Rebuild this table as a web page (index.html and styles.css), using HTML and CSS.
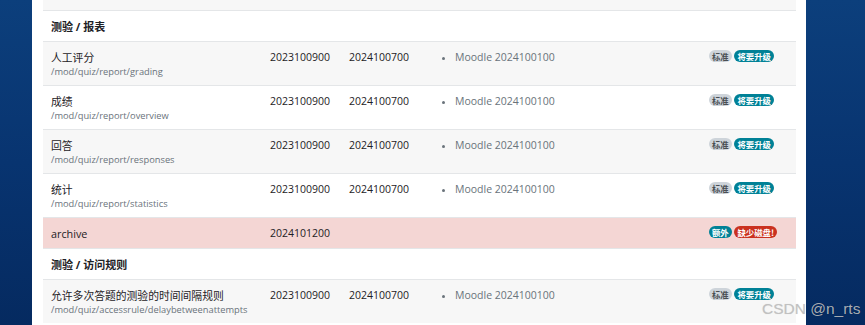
FILE: index.html
```html
<!DOCTYPE html>
<html lang="zh">
<head>
<meta charset="utf-8">
<link rel="stylesheet" href="styles.css">
</head>
<body>
<div class="panel">
  <div class="top-strip"></div>
  <table class="plugins">
    <colgroup>
      <col class="c-name"><col class="c-ver"><col class="c-req"><col class="c-dep"><col class="c-status">
    </colgroup>
    <tbody>
      <tr class="section"><th colspan="5">测验 / 报表</th></tr>
      <tr class="odd">
        <td><div class="name">人工评分</div><div class="path">/mod/quiz/report/grading</div></td>
        <td>2023100900</td><td>2024100700</td>
        <td><ul class="deps"><li>Moodle 2024100100</li></ul></td>
        <td><span class="badge std">标准</span> <span class="badge info">将要升级</span></td>
      </tr>
      <tr>
        <td><div class="name">成绩</div><div class="path">/mod/quiz/report/overview</div></td>
        <td>2023100900</td><td>2024100700</td>
        <td><ul class="deps"><li>Moodle 2024100100</li></ul></td>
        <td><span class="badge std">标准</span> <span class="badge info">将要升级</span></td>
      </tr>
      <tr class="odd">
        <td><div class="name">回答</div><div class="path">/mod/quiz/report/responses</div></td>
        <td>2023100900</td><td>2024100700</td>
        <td><ul class="deps"><li>Moodle 2024100100</li></ul></td>
        <td><span class="badge std">标准</span> <span class="badge info">将要升级</span></td>
      </tr>
      <tr>
        <td><div class="name">统计</div><div class="path">/mod/quiz/report/statistics</div></td>
        <td>2023100900</td><td>2024100700</td>
        <td><ul class="deps"><li>Moodle 2024100100</li></ul></td>
        <td><span class="badge std">标准</span> <span class="badge info">将要升级</span></td>
      </tr>
      <tr class="danger">
        <td><div class="name">archive</div></td>
        <td>2024101200</td><td></td><td></td>
        <td><span class="badge info">额外</span> <span class="badge red">缺少磁盘!</span></td>
      </tr>
      <tr class="section"><th colspan="5">测验 / 访问规则</th></tr>
      <tr class="odd">
        <td><div class="name">允许多次答题的测验的时间间隔规则</div><div class="path">/mod/quiz/accessrule/delaybetweenattempts</div></td>
        <td>2023100900</td><td>2024100700</td>
        <td><ul class="deps"><li>Moodle 2024100100</li></ul></td>
        <td><span class="badge std">标准</span> <span class="badge info">将要升级</span></td>
      </tr>
    </tbody>
  </table>
</div>
<div class="watermark">CSDN @n_rts</div>
</body>
</html>
```

FILE: styles.css
```css
html, body {
  margin: 0;
  padding: 0;
  height: 100%;
  overflow: hidden;
}
body {
  background: linear-gradient(180deg, #0c3f7c 0%, #083470 50%, #052a60 100%);
  font-family: "Open Sans", "Noto Sans CJK SC", sans-serif;
  color: #1d2125;
  font-size: 10.5px;
}
.panel {
  margin-left: 32px;
  width: 753px;
  min-height: 100%;
  background: #fff;
  padding: 0 10px 0 11px;
}
.top-strip {
  height: 10px;
  background: #f7f7f7;
}
.plugins {
  width: 753px;
  border-collapse: collapse;
  table-layout: fixed;
}
.c-name { width: 219px; }
.c-ver { width: 79px; }
.c-req { width: 94px; }
.c-dep { width: 266px; }
.c-status { width: 95px; }
.plugins td, .plugins th {
  border-top: 1px solid #e4e6e8;
  padding: 8px 8px 7px;
  line-height: 15px;
  vertical-align: top;
  text-align: left;
}
.plugins tr.odd td { background: #f7f7f7; }
.plugins tr.danger td { background: #f4d6d4; }
.section th {
  font-weight: 700;
  font-size: 11px;
  background: #fff;
}
.name { line-height: 15px; font-size: 10.8px; }
.path {
  font-size: 9.3px;
  line-height: 13px;
  color: #6a737b;
}
.deps {
  margin: 0;
  padding-left: 12px;
  color: #6a737b;
}
.deps li::marker { font-size: 9px; }
.badge {
  display: inline-block;
  font-family: "Noto Sans CJK SC", sans-serif;
  font-size: 8.4px;
  font-weight: 700;
  line-height: 10px;
  padding: 1px 3px;
  border-radius: 6px;
  vertical-align: 1px;
}
.badge.std { background: #ced4da; color: #4a4f54; }
.badge.info { background: #008196; color: #fff; }
.badge.red { background: #ca3120; color: #fff; }
.watermark {
  position: absolute;
  left: 762px;
  top: 300px;
  font-family: "Liberation Sans", Arial, sans-serif;
  font-size: 15.5px;
  color: rgba(190, 190, 190, 0.9);
  text-shadow: 0 0 1px rgba(0,0,0,0.15);
  white-space: nowrap;
}
```
